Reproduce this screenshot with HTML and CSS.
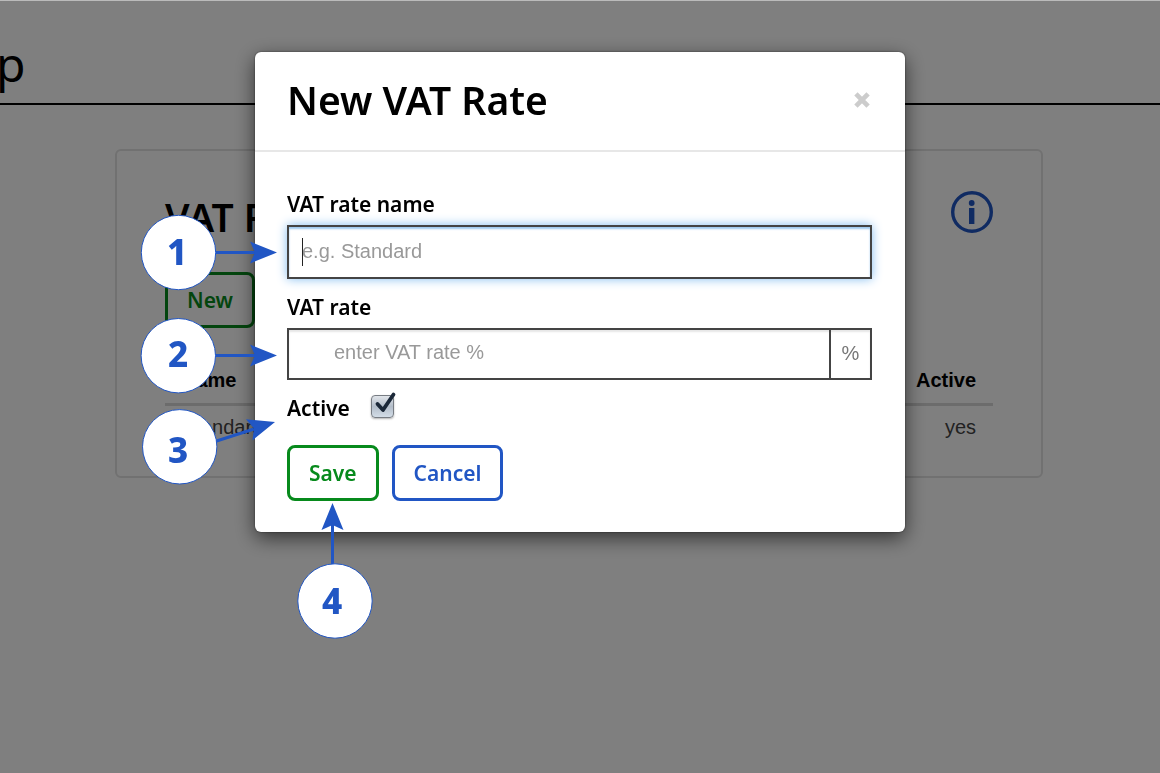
FILE: index.html
```
<!DOCTYPE html>
<html lang="en">
<head>
<meta charset="utf-8">
<meta name="viewport" content="width=device-width, initial-scale=1">
<title>New VAT Rate</title>
<link rel="stylesheet" href="styles.css">
</head>
<body>
<header class="page-header"><h1 class="page-title">p</h1></header>
<main class="card">
  <div class="card-head">
    <h2 class="heading">VAT Rates</h2>
    <svg class="info" viewBox="0 0 42 42" role="img" aria-label="Information">
      <circle cx="21" cy="21" r="19.3" fill="none" stroke="#2156c4" stroke-width="3.4"/>
      <circle cx="20.7" cy="12" r="2.900" fill="#2156c4"/>
      <path d="M18 17h5.400v16H18z" fill="#2156c4"/>
    </svg>
  </div>
  <button class="btn btn-green" type="button">New</button>
  <table class="rates">
    <thead><tr><th scope="col">Name</th><th scope="col">Active</th></tr></thead>
    <tbody><tr><td>Standard</td><td>yes</td></tr></tbody>
  </table>
</main>

<div class="overlay">
  <section class="modal" role="dialog" aria-modal="true" aria-labelledby="modal-title">
    <div class="modal-head">
      <h2 class="heading" id="modal-title">New VAT Rate</h2>
      <button class="close" type="button" aria-label="Close">
        <svg class="close-icon" viewBox="0 0 16 16" aria-hidden="true"><path d="M2.600 2.600l10.800 10.800M13.400 2.600L2.600 13.400" stroke="#ccc" stroke-width="4.200" stroke-linecap="butt"/></svg>
      </button>
    </div>
    <form class="modal-body">
      <label class="label" for="rate-name">VAT rate name</label>
      <div class="field focused">
        <input class="input" id="rate-name" type="text" placeholder="e.g. Standard">
        <span class="caret"></span>
      </div>
      <label class="label" for="rate">VAT rate</label>
      <div class="field group">
        <input class="input input-rate" id="rate" type="text" placeholder="enter VAT rate %">
        <span class="addon">%</span>
      </div>
      <div class="check-row">
        <label class="label" for="active">Active</label>
        <span class="check">
          <input class="check-box" id="active" type="checkbox" checked>
          <svg class="tick" viewBox="0 0 26 28" aria-hidden="true"><path d="M6.500 14l5.500 6L22.500 4.500" fill="none" stroke="#1b2838" stroke-width="3.800" stroke-linecap="round" stroke-linejoin="round"/></svg>
        </span>
      </div>
      <div class="actions">
        <button class="btn btn-green" type="button">Save</button>
        <button class="btn btn-blue" type="button">Cancel</button>
      </div>
    </form>
    <svg class="callouts" viewBox="135 210 250 435" aria-hidden="true">
      <defs><path id="head" d="M0 0L-27-11L-22 0L-27 11z"/></defs>
      <g stroke="#2156c4" stroke-width="3">
        <path d="M214 252.500H256M214 355.500H256M215 441.500L254 429M332.500 566V524"/>
      </g>
      <g fill="#2156c4">
        <use href="#head" transform="translate(277 252.500)"/>
        <use href="#head" transform="translate(277 355.500)"/>
        <use href="#head" transform="translate(275 422) rotate(-17)"/>
        <use href="#head" transform="translate(332.500 503) rotate(-90)"/>
      </g>
      <g fill="#fff" stroke="#2156c4">
        <circle cx="178.500" cy="252.500" r="37.200"/>
        <circle cx="178.300" cy="355.700" r="37.200"/>
        <circle cx="179.700" cy="446.800" r="37.200"/>
        <circle cx="335" cy="601" r="37.200"/>
      </g>
      <g class="numbers">
        <text x="177" y="265">1</text>
        <text x="178" y="367">2</text>
        <text x="178" y="463">3</text>
        <text x="332" y="614">4</text>
      </g>
    </svg>
  </section>
</div>
</body>
</html>
```
FILE: styles.css
```
* { box-sizing: border-box; }
body {
  margin: 0;
  min-height: 100vh;
  background: #fff;
  color: #000;
  font-family: "Liberation Sans", Arial, sans-serif;
  font-size: 20px;
  line-height: 24px;
  overflow: hidden;
}
.page-header {
  height: 105px;
  padding-top: 34px;
  border-bottom: 2px solid #000;
}
.page-title {
  margin: 0 0 0 -4px;
  font: 400 48px/60px "Noto Sans", sans-serif;
}
.card {
  margin: 44px 117px 0 115px;
  padding: 40px 48px 25px;
  border: 2px solid #e2e2e2;
  border-radius: 6px;
}
.card-head {
  display: flex;
  justify-content: space-between;
  align-items: flex-start;
  margin-bottom: 29px;
}
.heading {
  margin: 0;
  font: 600 39px/50px "Noto Sans", sans-serif;
}
.card-head .heading { line-height: 52px; }
.info { width: 42px; height: 42px; }
.btn {
  height: 56px;
  padding: 0 19px;
  border: 3px solid;
  border-radius: 8px;
  background: transparent;
  font: 600 21px/26px "Noto Sans", sans-serif;
}
.btn-green { color: #078a1c; }
.btn-blue { color: #2156c4; }
.rates {
  width: 100%;
  margin-top: 35px;
  border-collapse: separate;
  border-spacing: 0;
}
.rates th {
  padding: 5px 17px 11px;
  border-bottom: 3px solid #d8d8d8;
  text-align: left;
}
.rates td { padding: 9px 17px 12px; color: #444; }
.rates th:last-child, .rates td:last-child { text-align: right; }

.overlay {
  position: fixed;
  inset: 0;
  padding-top: 51px;
  border-top: 1px solid #bbb;
  background: rgba(0, 0, 0, .5);
}
.modal {
  position: relative;
  max-width: 650px;
  margin: 0 auto;
  border-radius: 6px;
  background: #fff;
  box-shadow: 0 6px 20px rgba(0, 0, 0, .6), 0 0 2px rgba(0, 0, 0, .6);
}
.modal-head {
  display: flex;
  align-items: center;
  justify-content: space-between;
  height: 100px;
  padding: 0 34px 2px 32px;
  border-bottom: 2px solid #e7e7e7;
}
.close {
  display: flex;
  padding: 0;
  border: 0;
  background: none;
}
.close-icon { width: 18px; height: 18px; }
.modal-body { padding: 39px 33px 31px 32px; }
.label {
  display: block;
  font: 600 21px/26px "Noto Sans", sans-serif;
}
.field {
  position: relative;
  display: flex;
  margin: 8px 0 15px;
  border: 2px solid #444;
  box-shadow: inset 0 2px 2px rgba(0, 0, 0, .1);
}
.focused {
  box-shadow: inset 0 2px 2px #9dc9ef, 0 0 10px #83bdf0;
}
.input {
  flex: 1;
  min-width: 0;
  height: 50px;
  padding: 0 13px 2px;
  border: 0;
  outline: 0;
  background: none;
  font: 20px/24px "Liberation Sans", Arial, sans-serif;
}
.input::placeholder { color: #999; opacity: 1; }
.input-rate { height: 48px; padding: 0 13px 4px 45px; }
.caret {
  position: absolute;
  left: 13px;
  top: 11px;
  width: 1px;
  height: 28px;
  background: #222;
}
.addon {
  display: flex;
  align-items: center;
  justify-content: center;
  width: 41px;
  padding-bottom: 3px;
  border-left: 2px solid #444;
  color: #777;
}
.check-row { display: flex; gap: 21px; }
.check { position: relative; display: flex; }
.check-box {
  appearance: none;
  width: 23px;
  height: 23px;
  margin: 0;
  border: 1px solid #777c83;
  border-radius: 4px;
  background: linear-gradient(#e1e5ea, #b3bdc9 50%, #d3dde7);
  box-shadow: 0 1px 2px rgba(0, 0, 0, .3);
}
.tick {
  position: absolute;
  left: 0;
  top: -5px;
  width: 26px;
  height: 28px;
  pointer-events: none;
}
.actions { display: flex; gap: 13px; margin-top: 24px; }
.callouts {
  position: absolute;
  left: -120px;
  top: 158px;
  width: 250px;
  height: 435px;
  pointer-events: none;
}
.numbers {
  fill: #2156c4;
  font: 800 35px "Noto Sans", sans-serif;
  text-anchor: middle;
}
```
